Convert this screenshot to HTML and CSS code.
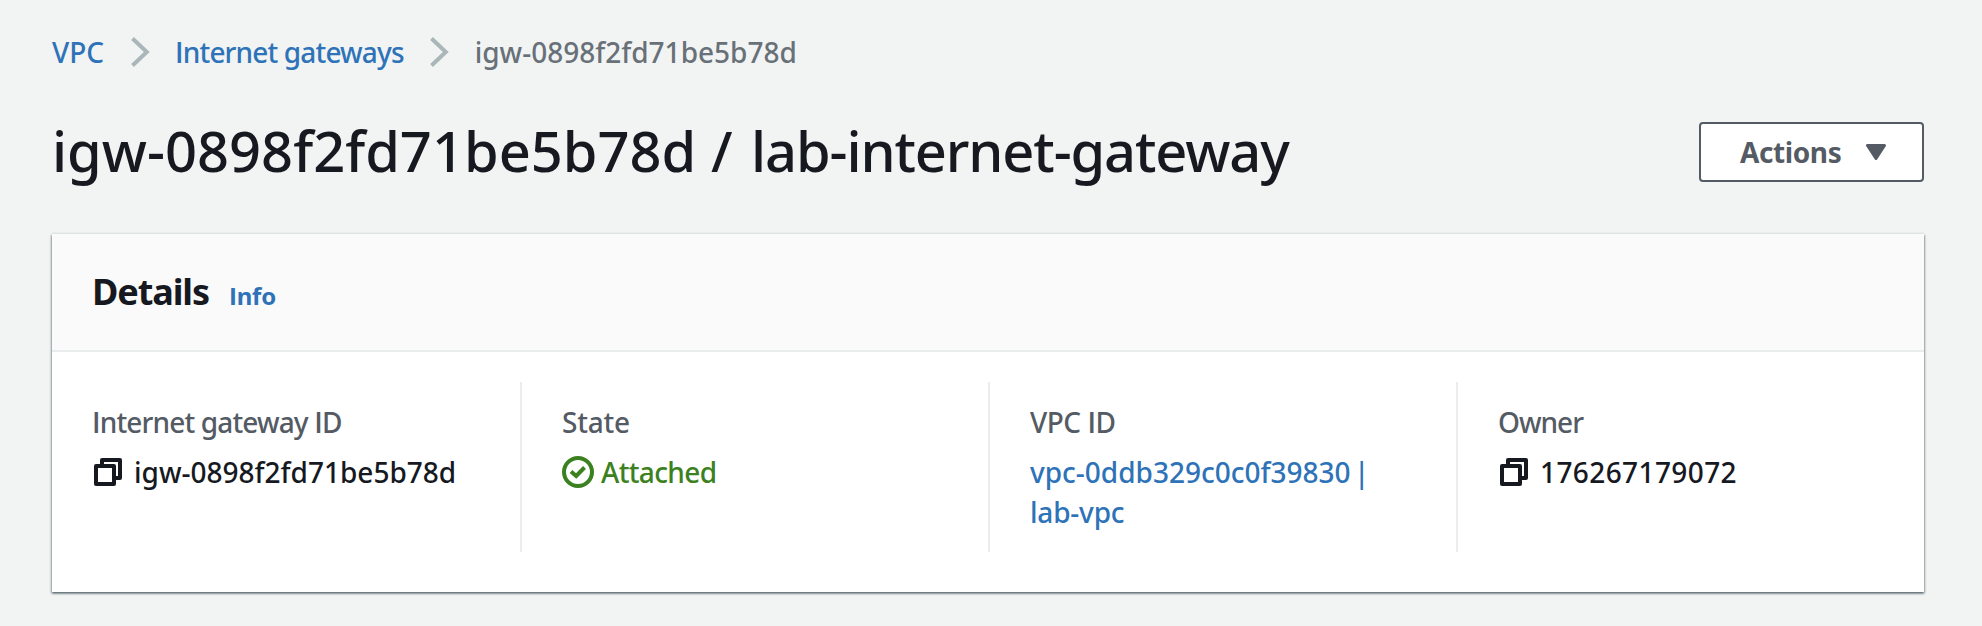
FILE: index.html
```html
<!DOCTYPE html>
<html lang="en">
<head>
<meta charset="utf-8">
<title>Internet gateway</title>
<link rel="stylesheet" href="styles.css">
</head>
<body>
<main class="page">
  <nav class="breadcrumbs">
    <a class="link" href="#">VPC</a>
    <svg class="chevron" viewBox="0 0 20 30"><path d="M1.5 1.5 15.8 15 1.5 28.5"/></svg>
    <a class="link crumb-list" href="#"><span class="plain">I</span>nternet gateways</a>
    <svg class="chevron" viewBox="0 0 20 30"><path d="M1.5 1.5 15.8 15 1.5 28.5"/></svg>
    <span>igw-0898f2fd71be5b78d</span>
  </nav>
  <header class="title-row">
    <h1 class="title">igw-0898f2fd71be5b78d / <span class="title-name">lab-internet-gateway</span></h1>
    <button class="actions" type="button"><span class="actions-text">Actions</span><svg class="caret" viewBox="0 0 20 16"><path d="M1.5 1.5H18.5L10 14.5Z"/></svg></button>
  </header>
  <section class="panel">
    <div class="panel-header">
      <h2 class="panel-title">Details</h2>
      <a class="link info" href="#"><span class="plain">I</span>nfo</a>
    </div>
    <div class="columns">
      <div class="column">
        <div class="label label-id"><span class="plain">I</span>nternet gateway <span class="plain">I</span>D</div>
        <div class="value"><svg class="copy" viewBox="0 0 28 28"><path d="M8 6V2H26V20H22M2 8H20V26H2Z"/></svg><span>igw-0898f2fd71be5b78d</span></div>
      </div>
      <div class="column">
        <div class="label label-state">State</div>
        <div class="value status"><svg class="check" viewBox="0 0 32 32"><circle cx="16" cy="16" r="14"/><path d="M9 15.5 14.2 20 22.5 11.5"/></svg><span class="status-text">Attached</span></div>
      </div>
      <div class="column">
        <div class="label label-vpc">VPC <span class="plain">I</span>D</div>
        <div class="value"><a class="link" href="#"><span class="vpc-id">vpc-0ddb329c0c0f39830 |</span><br><span class="vpc-name">lab-vpc</span></a></div>
      </div>
      <div class="column">
        <div class="label label-owner">Owner</div>
        <div class="value"><svg class="copy" viewBox="0 0 28 28"><path d="M8 6V2H26V20H22M2 8H20V26H2Z"/></svg><span class="owner">176267179072</span></div>
      </div>
    </div>
  </section>
</main>
</body>
</html>
```
FILE: styles.css
```css
* { box-sizing: border-box; }
body {
  margin: 0;
  background: #f2f4f4;
  color: #16191f;
  font: 500 28px/40px "Noto Sans", "Open Sans", sans-serif;
  white-space: nowrap;
}
.page { padding: 32px 57px 34px 52px; }
.link { color: #2e73b8; text-decoration: none; }
/* Capital I without serifs */
.plain { font-family: "Open Sans", "Noto Sans", sans-serif; font-weight: 600; line-height: 1; }
.breadcrumbs { display: flex; align-items: center; height: 40px; color: #687078; }
.crumb-list { letter-spacing: -0.85px; }
.chevron { width: 20px; height: 30px; margin: 0 24.5px 0 26.5px; fill: none; stroke: #aab7b8; stroke-width: 4; }
.title-row { display: flex; justify-content: space-between; align-items: center; height: 60px; margin-top: 50px; }
.title { margin: 0 0 4px; font-size: 56px; font-weight: 500; line-height: 60px; }
.title-name { margin-left: 4px; letter-spacing: -1.12px; }
.actions {
  display: flex; align-items: center; width: 225px; height: 60px; padding: 0 36px 0 39px;
  justify-content: space-between; margin-right: 1px;
  border: 2px solid #545b64; border-radius: 4px; background: #fff;
  color: #545b64; font: inherit; font-weight: 700;
}
.actions-text { letter-spacing: -0.4px; }
.caret { width: 20px; height: 16px; fill: currentColor; stroke: currentColor; stroke-width: 3; stroke-linejoin: round; }
.panel {
  margin: 52px 1px 0 0; height: 358px; background: #fff;
  box-shadow: 0 2px 2px rgba(0, 28, 36, .3), 1px 1px 2px rgba(0, 28, 36, .3), -1px 1px 2px rgba(0, 28, 36, .3), 0 -2px 0 #eaeded;
}
.panel-header {
  display: flex; align-items: baseline; gap: 20px; height: 118px; padding: 36px 40px 0;
  background: #fafafa; border-bottom: 2px solid #eaeded;
}
.panel-title { margin: 0; font-size: 36px; font-weight: 700; line-height: 44px; letter-spacing: -1.1px; }
.info { font-size: 24px; font-weight: 700; letter-spacing: -0.2px; }
.info .plain { font-weight: 700; }
.columns { display: grid; grid-template-columns: repeat(4, 468px); padding-top: 30px; }
.column { height: 170px; padding: 20px 0 20px 40px; }
.column + .column { border-left: 2px solid #eaeded; }
.label { margin-bottom: 10px; color: #545b64; }
.label-id { letter-spacing: -0.85px; }
.label-state { letter-spacing: -0.2px; }
.label-vpc { letter-spacing: -0.5px; }
.label-owner { letter-spacing: -1px; }
.value { display: flex; align-items: center; }
.copy { width: 28px; height: 28px; margin: 0 12px 0 2px; fill: none; stroke: currentColor; stroke-width: 4; stroke-linejoin: round; }
.status { color: #3b8120; }
.check { width: 32px; height: 32px; margin-right: 7px; fill: none; stroke: currentColor; stroke-width: 4; }
.status-text { letter-spacing: -0.65px; }
.vpc-id { word-spacing: -3.8px; }
.vpc-name { letter-spacing: -0.2px; }
.owner { letter-spacing: 0.4px; }
```
